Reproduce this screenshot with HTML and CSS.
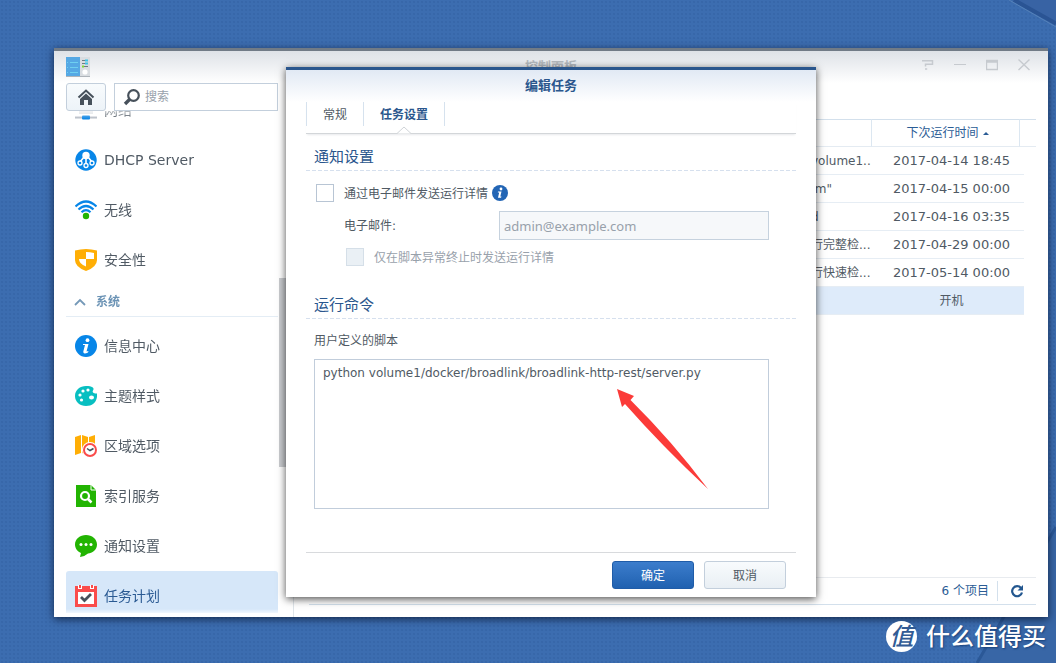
FILE: index.html
```html
<!DOCTYPE html>
<html lang="zh-CN">
<head>
<meta charset="utf-8">
<title>控制面板</title>
<link rel="stylesheet" href="styles.css">
</head>
<body>
<div class="desktop">
  <svg class="wallpaper" viewBox="0 0 300 663" preserveAspectRatio="xMaxYMid slice" aria-hidden="true">
    <path d="M256 0L300 25V0z" fill="#3863a4"/>
    <path d="M258 0L300 23.500" stroke="#2a5494" stroke-width="4"/>
    <path d="M253 0L300 27" stroke="#5581b8"/>
    <path d="M300 527L221 663H300z" fill="#3866a6"/>
    <path d="M300 527L221 663" stroke="#2b5897" stroke-width="3"/>
  </svg>

  <main class="window">
    <header class="titlebar">
      <svg class="app-icon" width="24" height="20" viewBox="0 0 24 20">
        <path d="M0 0h14v19H0z" fill="#55a8e4"/>
        <path d="M14 0h10v19H14z" fill="#d9dde1"/>
        <path d="M0 19h24v1H0z" fill="#aeb4ba"/>
        <path d="M1 5.500h1m2 0h8M1 10.500h1m2 0h8M1 15.500h1m2 0h8" stroke="#6fd0f0"/>
        <path d="M16 3.500h6M16 6.500h6M16 9.500h6" stroke="#6d7c86" stroke-width="1.200"/>
        <path d="M19 3.500h3M19 6.500h3" stroke="#3cc3e8" stroke-width="2"/>
        <path d="M16 9.500h2" stroke="#83dc35" stroke-width="2"/>
        <circle cx="19" cy="15" r="2.600" fill="#fff"/>
      </svg>
      <h1 class="window-title">控制面板</h1>
      <div class="window-tools">
        <button class="tool" type="button" aria-label="帮助"><svg width="12" height="12" viewBox="0 0 12 12"><path d="M0 1.700h10.500v3.500H3.500v2.300M3 10h2.200" fill="none" stroke="#c6cacf" stroke-width="1.500"/></svg></button>
        <button class="tool" type="button" aria-label="最小化"><svg width="12" height="12" viewBox="0 0 12 12"><path d="M0 5.500h12" stroke="#c6cacf"/></svg></button>
        <button class="tool" type="button" aria-label="最大化"><svg width="12" height="12" viewBox="0 0 12 12"><path d="M.5 1.500h11v9H.5zM1 3h10" fill="none" stroke="#c6cacf" stroke-width="1.400"/></svg></button>
        <button class="tool" type="button" aria-label="关闭"><svg width="12" height="12" viewBox="0 0 12 12"><path d="M.5 .5l11 10.500M11.500 .5L.5 11" stroke="#c6cacf" stroke-width="1.400"/></svg></button>
      </div>
    </header>

    <div class="body">
      <aside class="sidebar">
        <div class="search-row">
          <button class="home" type="button" aria-label="主页"><svg width="18" height="18" viewBox="0 0 18 18"><path d="M1.500 9.500L9 2.500l7.500 7" fill="none" stroke="#47515b" stroke-width="2"/><path d="M3 11L9 5.500l6 5.500V17h-4v-5H7v5H3z" fill="#47515b"/></svg></button>
          <label class="search">
            <svg width="18" height="18" viewBox="0 0 18 18"><circle cx="10.500" cy="7.500" r="5.300" fill="none" stroke="#47515b" stroke-width="2.200"/><path d="M6.500 11.500L2 16" stroke="#47515b" stroke-width="3.400"/></svg>
            <input class="search-input" type="text" placeholder="搜索" aria-label="搜索">
          </label>
        </div>
        <nav class="nav">
          <a class="nav-item" href="#network"><svg class="icon" viewBox="0 0 22 22"><path d="M4 1h14v14H4z" fill="#dadde1"/><path d="M0 18.500h22" stroke="#b4bbc4" stroke-width="2"/><rect x="7" y="16.500" width="8" height="4" rx="1" fill="#0a84e4"/></svg>网络</a>
          <a class="nav-item" href="#dhcp"><svg class="icon" viewBox="0 0 22 22"><circle cx="11" cy="11" r="10.700" fill="#0786e8"/><circle cx="11" cy="6.500" r="3.700" fill="#fff"/><path d="M9 8L5 13m6-4v5m2-6l4 5" stroke="#fff" stroke-width="1.600"/><g fill="#0786e8" stroke="#fff" stroke-width="1.300"><circle cx="5" cy="14" r="2"/><circle cx="11" cy="16.500" r="2"/><circle cx="17" cy="14" r="2"/></g></svg>DHCP Server</a>
          <a class="nav-item" href="#wireless"><svg class="icon" viewBox="0 0 22 22"><g fill="none" stroke="#0786e8" stroke-width="2.200"><path d="M.5 7.500Q11-2.500 21.500 7.500"/><path d="M3.500 10.500Q11 3.500 18.500 10.500"/><path d="M6.500 13.200Q11 9 15.500 13.200"/></g><circle cx="11" cy="17" r="3.200" fill="#22b402"/></svg>无线</a>
          <a class="nav-item" href="#security"><svg class="icon" viewBox="0 0 22 22"><path d="M0 1.500Q11-1.500 22 1.500V11Q22 18 11 22Q0 18 0 11z" fill="#ffae05"/><path d="M11 3Q15 3 19 4V10H11zM4 10h7v7.500Q4 15 4 10z" fill="#fff"/></svg>安全性</a>
          <a class="nav-group" href="#system"><svg width="12" height="8" viewBox="0 0 12 8"><path d="M1 7l5-5 5 5" fill="none" stroke="#7599b8" stroke-width="1.800"/></svg>系统</a>
          <a class="nav-item" href="#info"><svg class="icon" viewBox="0 0 22 22"><circle cx="11" cy="11" r="11" fill="#0786e8"/><circle cx="12.500" cy="5.200" r="1.900" fill="#fff"/><path d="M8 9h5.500l-2 7.500L13.500 16l-.5 1.500Q8 20 8.300 16.500L10 10H8z" fill="#fff"/></svg>信息中心</a>
          <a class="nav-item" href="#theme"><svg class="icon" viewBox="0 0 22 22"><path d="M11 1C17 1 20 3 18 5.500C16.500 8 20 8.500 22 8.500V12C21 18 17 21 11 21C5 21 0 17 0 11S5 1 11 1z" fill="#08bfc1"/><g fill="#fff"><circle cx="5" cy="10" r="1.600"/><circle cx="8" cy="6" r="1.600"/><circle cx="13" cy="5" r="1.600"/><circle cx="6.500" cy="15" r="1.600"/><ellipse cx="16.500" cy="12.500" rx="2.500" ry="2"/></g></svg>主题样式</a>
          <a class="nav-item" href="#region"><svg class="icon" viewBox="0 0 22 22"><path d="M0 2l6-2v18l-6 2zM7 0l6 2v18l-6-2zM14 2l6-2v18l-6 2z" fill="#ffae05"/><circle cx="15" cy="15" r="8" fill="#fff"/><circle cx="15" cy="15" r="6" fill="#fff" stroke="#fa4c4b" stroke-width="2"/><path d="M12 13.500l3 2 3.500-2" fill="none" stroke="#47515b" stroke-width="1.500"/></svg>区域选项</a>
          <a class="nav-item" href="#index"><svg class="icon" viewBox="0 0 22 22"><path d="M1 0h15l5 5v17H1z" fill="#22b402"/><path d="M16 0v5h5" fill="none" stroke="#fff"/><circle cx="10" cy="11" r="4" fill="none" stroke="#fff" stroke-width="2.200"/><path d="M13 14l3.500 3.500" stroke="#fff" stroke-width="2.500"/></svg>索引服务</a>
          <a class="nav-item" href="#notice"><svg class="icon" viewBox="0 0 22 22"><path d="M11 0C17 0 22 4 22 9.500C22 15 17 18 13 18.500Q9 22 5 22L6 18C2 16.500 0 13 0 9.500C0 4 5 0 11 0z" fill="#22b402"/><g fill="#fff"><circle cx="6" cy="9.500" r="1.500"/><circle cx="11" cy="9.500" r="1.500"/><circle cx="16" cy="9.500" r="1.500"/></g></svg>通知设置</a>
          <a class="nav-item nav-item--active" href="#tasks" aria-current="page"><svg class="icon" viewBox="0 0 22 22"><path d="M0 1h22v21H0z" fill="#fa4c4b"/><path d="M3 7h16v12H3z" fill="#fff"/><path d="M3 0h4v4H3zM15 0h4v4h-4z" fill="#fff"/><path d="M4 0h2v3H4zM16 0h2v3h-2z" fill="#fa4c4b"/><path d="M6 12l3.500 3.500L16 9" fill="none" stroke="#47515b" stroke-width="2.800"/></svg>任务计划</a>
        </nav>
        <div class="scroll-thumb"></div>
      </aside>

      <section class="content">
        <table class="tasks">
          <colgroup><col><col class="col-time"><col class="col-gap"><col class="col-end"></colgroup>
          <thead>
            <tr><th></th><th class="sorted">下次运行时间<svg width="6" height="3" viewBox="0 0 6 3"><path d="M0 3l3-3 3 3z" fill="#2a5c95"/></svg></th><th colspan="2"></th></tr>
          </thead>
          <tbody>
            <tr><td>volume1..</td><td class="time">2017-04-14 18:45</td><td></td></tr>
            <tr><td>.m"</td><td class="time">2017-04-15 00:00</td><td></td></tr>
            <tr><td>d</td><td class="time">2017-04-16 03:35</td><td></td></tr>
            <tr><td>行完整检...</td><td class="time">2017-04-29 00:00</td><td></td></tr>
            <tr><td>行快速检...</td><td class="time">2017-05-14 00:00</td><td></td></tr>
            <tr class="selected"><td></td><td class="time time--boot">开机</td><td></td></tr>
          </tbody>
        </table>
        <footer class="status">
          <span class="count">6 个项目</span>
          <button class="refresh" type="button" aria-label="刷新"><svg width="14" height="14" viewBox="0 0 14 14"><path d="M11 4A5 5 0 1 0 12 8.500" fill="none" stroke="#23578f" stroke-width="2.200"/><path d="M13 1v5.500H7.500z" fill="#23578f"/></svg></button>
        </footer>
      </section>
    </div>

    <form class="dialog" role="dialog" aria-labelledby="dialog-title">
      <h2 class="dialog-title" id="dialog-title">编辑任务</h2>
      <div class="tabs">
        <button class="tab" type="button">常规</button>
        <button class="tab tab--active" type="button">任务设置<svg class="tab-mark" width="14" height="8" viewBox="0 0 14 8"><path d="M0 7.500L7 1l7 6.500" fill="#fff" stroke="#cfd3d7"/></svg></button>
      </div>
      <div class="panel">
        <h3 class="heading">通知设置</h3>
        <div class="check-row">
          <input class="check" type="checkbox" id="notify"><label for="notify">通过电子邮件发送运行详情</label>
          <svg width="16" height="16" viewBox="0 0 16 16"><circle cx="8" cy="8" r="8" fill="#2265b5"/><circle cx="9" cy="4" r="1.400" fill="#fff"/><path d="M6 6.500h3.500L8.300 11.500h1.200L9 12.700H6L7.200 7.500H5.800z" fill="#fff"/></svg>
        </div>
        <div class="mail-row">
          <label for="mail">电子邮件:</label>
          <input class="mail" type="text" id="mail" placeholder="admin@example.com" disabled>
        </div>
        <div class="check-row check-row--nested">
          <input class="check" type="checkbox" id="abnormal" disabled><label for="abnormal">仅在脚本异常终止时发送运行详情</label>
        </div>
        <h3 class="heading heading--command">运行命令</h3>
        <label class="script-label" for="script">用户定义的脚本</label>
        <textarea class="script" id="script" spellcheck="false">python volume1/docker/broadlink/broadlink-http-rest/server.py</textarea>
      </div>
      <div class="actions">
        <button class="button button--primary" type="submit">确定</button>
        <button class="button" type="button">取消</button>
      </div>
      <svg class="pointer" width="92" height="102" viewBox="0 0 92 102" aria-hidden="true"><path d="M0 0L17 7L13.500 11Q55 52 91 100Q45 57 8 15L5 18z" fill="#fb3b39"/></svg>
    </form>
  </main>

  <div class="brand">
    <span class="brand-badge">值</span>
    <span class="brand-name">什么值得买</span>
  </div>
</div>
</body>
</html>
```
FILE: styles.css
```css
* {
  box-sizing: border-box;
}

body {
  margin: 0;
  color: #505a64;
  font: 12px/16px "DejaVu Sans", "Noto Sans CJK SC", sans-serif;
}

button,
input,
textarea {
  color: inherit;
  font: inherit;
}

h1,
h2,
h3 {
  margin: 0;
}

a {
  color: inherit;
  text-decoration: none;
}

svg {
  display: block;
  flex: none;
}

.desktop {
  position: relative;
  display: flex;
  height: 100vh;
  min-height: 640px;
  padding: 48px 8px 46px 54px;
  overflow: hidden;
  background:
    radial-gradient(rgba(20, 60, 120, 0.12) 1px, transparent 1px) 0 0 / 4px 4px,
    #3c6db0;
}

.wallpaper {
  position: absolute;
  top: 0;
  right: 0;
  height: 100%;
}

.window {
  position: relative;
  display: flex;
  flex: 1;
  flex-direction: column;
  min-width: 0;
  border-top: 3px solid #717b86;
  background: linear-gradient(#dee2e7, #fff 32px);
  box-shadow: 0 2px 8px rgba(0, 10, 30, 0.7);
}

.titlebar {
  display: grid;
  grid-template-columns: 1fr auto 1fr;
  align-items: center;
  height: 32px;
  padding: 0 12px;
}

.window-title {
  color: #b4b9be;
  font-size: 13px;
  line-height: 16px;
}

.window-tools {
  display: flex;
  justify-content: flex-end;
  gap: 20px;
  padding: 0 6px 4px 0;
}

.tool {
  padding: 0;
  border: 0;
  background: none;
}

.body {
  display: flex;
  flex: 1;
  min-height: 0;
}

.sidebar {
  position: relative;
  display: flex;
  flex: none;
  flex-direction: column;
  width: 240px;
  padding: 0 15px 4px 12px;
  border-right: 1px solid #dfe5ea;
}

.search-row {
  display: flex;
  flex: none;
  gap: 8px;
  height: 28px;
}

.home {
  display: grid;
  flex: none;
  place-items: center;
  width: 40px;
  padding: 0;
  border: 1px solid #c3cfdc;
  border-radius: 3px;
  background: linear-gradient(#f8fbfd, #edf3f8);
}

.search {
  display: flex;
  flex: 1;
  align-items: center;
  gap: 4px;
  min-width: 0;
  padding-left: 8px;
  border: 1px solid #c3cfdc;
  background: #fff;
}

.search-input {
  flex: 1;
  min-width: 0;
  padding: 0;
  border: 0;
  outline: 0;
  background: none;
}

.search-input::placeholder {
  color: #98a1ab;
  opacity: 1;
}

.nav {
  flex: 1;
  min-height: 0;
  overflow: hidden;
  mask: linear-gradient(rgba(0, 0, 0, 0.4), #000 8px);
}

.nav-item {
  display: flex;
  align-items: center;
  gap: 7px;
  height: 50px;
  padding-left: 9px;
  border-radius: 3px;
  font-size: 14px;
}

.nav-item:first-child {
  margin-top: -26px;
}

.nav-item--active {
  background: linear-gradient(#d6e7f9 38px, #fff 44px);
  color: #2a5a93;
}

.icon {
  width: 22px;
  height: 22px;
}

.nav-group {
  display: flex;
  align-items: center;
  gap: 10px;
  height: 32px;
  margin-bottom: 4px;
  padding: 3px 0 0 8px;
  border-bottom: 1px solid #e4edf5;
  color: #6b93b5;
  font-weight: bold;
}

.scroll-thumb {
  position: absolute;
  top: 195px;
  right: 3px;
  width: 11px;
  height: 189px;
  background: #c9cbcf;
}

.content {
  display: flex;
  flex: 1;
  flex-direction: column;
  min-width: 0;
  padding: 36px 12px 12px 15px;
}

.tasks {
  width: 100%;
  border-spacing: 0;
  table-layout: fixed;
}

.col-time {
  width: 148px;
}

.col-gap {
  width: 4px;
}

.col-end {
  width: 12px;
}

.tasks th {
  height: 28px;
  padding: 0;
  border-top: 1px solid #d3e0ec;
  border-right: 1px solid #dce7f1;
  border-bottom: 1px solid #e4ebf2;
  color: #2a5c95;
  font-weight: normal;
}

.tasks .sorted {
  padding-left: 4px;
}

.tasks th:last-child {
  border-right: 0;
}

.sorted svg {
  display: inline-block;
  margin-left: 4px;
  vertical-align: 2px;
}

.tasks td {
  height: 28px;
  padding: 0;
  border-bottom: 1px solid #e6edf4;
  white-space: nowrap;
}

.tasks td:first-child {
  text-indent: calc(100% - 61px);
}

.tasks .time {
  padding-left: 11px;
  font-size: 13px;
  text-align: center;
}

.tasks .time--boot {
  font-size: 12px;
}

.tasks .selected td {
  background: #deebfa;
}

.status {
  display: flex;
  align-items: center;
  justify-content: flex-end;
  height: 28px;
  margin-top: auto;
  border-top: 1px solid #e8ebef;
  border-bottom: 1px solid #d3e0ec;
}

.count {
  padding-right: 8px;
  color: #2a5c95;
}

.refresh {
  display: grid;
  place-items: center;
  width: 39px;
  height: 20px;
  padding: 0;
  border: 0;
  border-left: 1px solid #d3e0ec;
  background: none;
}

.dialog {
  position: absolute;
  top: 16px;
  bottom: 20px;
  left: 50%;
  display: flex;
  flex-direction: column;
  width: 530px;
  margin-left: -265px;
  padding: 0 20px;
  border-top: 3px solid #2a568d;
  background: linear-gradient(#e1e9f4, #fff 32px);
  box-shadow: 0 2px 8px rgba(0, 0, 0, 0.7);
}

.dialog-title {
  padding: 8px 0;
  color: #2a568d;
  font-size: 13px;
  line-height: 16px;
  text-align: center;
}

.tabs {
  display: flex;
  height: 32px;
  border-bottom: 1px solid #d3d6d9;
  box-shadow: 0 2px 2px -1px #e8eaec;
}

.tab {
  position: relative;
  height: 24px;
  padding: 2px 16px 0;
  border: 0;
  border-right: 1px solid #d6e2ee;
  background: none;
}

.tab:first-child {
  border-left: 1px solid #d6e2ee;
}

.tab--active {
  color: #2a568d;
  font-weight: bold;
}

.tab-mark {
  position: absolute;
  top: 24px;
  left: 50%;
  margin-left: -7px;
}

.panel {
  padding-top: 10px;
}

.heading {
  height: 27px;
  padding: 3px 8px;
  background: repeating-linear-gradient(90deg, #d6e0ee 0 4px, transparent 4px 6px) bottom / 100% 1px no-repeat;
  color: #2a568d;
  font-size: 15px;
  font-weight: normal;
  line-height: 20px;
}

.heading--command {
  margin-top: 25px;
}

.check-row {
  display: flex;
  align-items: center;
  height: 20px;
  margin-top: 12px;
  padding-left: 10px;
}

.check-row label {
  margin: 0 4px 0 10px;
  padding-top: 2px;
}

.check-row--nested {
  margin-top: 7px;
  padding-left: 40px;
  color: #98a1ab;
}

.check {
  width: 18px;
  height: 18px;
  margin: 0;
  border: 1px solid #b8c5d4;
  appearance: none;
  background: #fff;
}

.check:disabled {
  border-color: #d5dfe8;
  background: #eaf0f5;
}

.mail-row {
  display: flex;
  align-items: center;
  justify-content: space-between;
  margin-top: 8px;
  padding: 0 27px 0 38px;
}

.mail {
  width: 270px;
  height: 29px;
  padding: 0 4px;
  border: 1px solid #c6d2de;
  border-radius: 0;
  background: #f6f8fa;
  font-family: "Noto Sans", sans-serif;
  font-size: 13px;
}

.mail::placeholder {
  color: #98a1ab;
  opacity: 1;
}

.script-label {
  display: block;
  padding: 14px 8px 10px;
}

.script {
  display: block;
  width: 455px;
  height: 150px;
  margin-left: 8px;
  padding: 5px 8px;
  border: 1px solid #c1cddb;
  outline: 0;
  resize: none;
}

.actions {
  display: flex;
  justify-content: flex-end;
  gap: 10px;
  margin-top: auto;
  padding: 8px 10px;
  border-top: 1px solid #d8dadd;
}

.button {
  width: 82px;
  height: 28px;
  padding: 2px 0 0;
  border: 1px solid #c3cfdc;
  border-radius: 3px;
  background: linear-gradient(#f8fbfd, #e9eff4);
}

.button--primary {
  border-color: #1f5ca8;
  background: linear-gradient(#3c7dcc, #2061b0);
  color: #fff;
}

.pointer {
  position: absolute;
  top: 319px;
  left: 331px;
}

.brand {
  position: absolute;
  right: 10px;
  bottom: 11px;
  display: flex;
  align-items: center;
  gap: 9px;
  color: #fff;
  text-shadow: 1px 1px 2px #17407a;
}

.brand-badge {
  display: grid;
  place-items: center;
  width: 31px;
  height: 31px;
  border-radius: 50%;
  background: #fff;
  color: #315b95;
  font-size: 24px;
  font-style: italic;
  font-weight: 500;
  text-shadow: none;
}

.brand-name {
  font-size: 24px;
  font-weight: 500;
}
```
